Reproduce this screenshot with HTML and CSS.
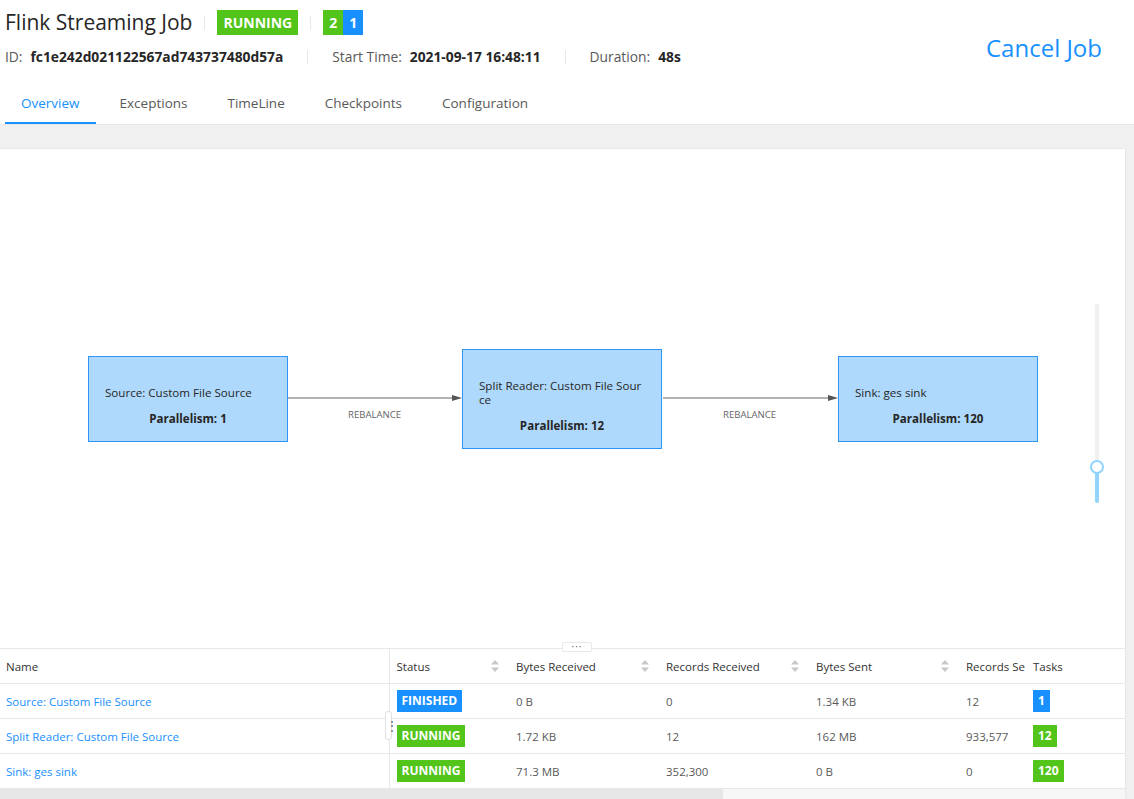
FILE: index.html
```html
<!DOCTYPE html>
<html lang="en">
<head>
  <meta charset="UTF-8">
  <title>Flink Streaming Job</title>
  <link rel="stylesheet" href="styles.css">
</head>
<body>
  <div class="job-header">
    <div class="job-info">
      <div class="job-title-row">
        <h1 class="job-name">Flink Streaming Job</h1>
        <span class="v-divider"></span>
        <span class="tag tag-lg green">RUNNING</span>
        <span class="v-divider"></span>
        <span class="tag-group">
          <span class="tag tag-lg green">2</span><span class="tag tag-lg blue">1</span>
        </span>
      </div>
      <div class="job-meta">
        <span class="meta-label">ID:</span>
        <span class="meta-value">fc1e242d021122567ad743737480d57a</span>
        <span class="v-divider wide"></span>
        <span class="meta-label">Start Time:</span>
        <span class="meta-value">2021-09-17 16:48:11</span>
        <span class="v-divider wide"></span>
        <span class="meta-label">Duration:</span>
        <span class="meta-value">48s</span>
      </div>
    </div>
    <a class="cancel-job">Cancel Job</a>
  </div>

  <div class="tabs">
    <div class="tab active">Overview</div>
    <div class="tab">Exceptions</div>
    <div class="tab">TimeLine</div>
    <div class="tab">Checkpoints</div>
    <div class="tab">Configuration</div>
  </div>

  <div class="main">
    <div class="card">
      <div class="graph">
        <svg class="edges" width="1125" height="499">
          <line x1="288" y1="249" x2="454" y2="249" />
          <polygon points="452,246 462,249 452,252" />
          <line x1="663" y1="249" x2="830" y2="249" />
          <polygon points="828,246 838,249 828,252" />
        </svg>
        <span class="edge-label" style="left: 348px;">REBALANCE</span>
        <span class="edge-label" style="left: 723px;">REBALANCE</span>

        <div class="node" style="left: 88px; top: 207px;">
          <div class="node-name">Source: Custom File Source</div>
          <div class="node-parallelism">Parallelism: 1</div>
        </div>
        <div class="node" style="left: 462px; top: 200px;">
          <div class="node-name">Split Reader: Custom File Sour<br>ce</div>
          <div class="node-parallelism">Parallelism: 12</div>
        </div>
        <div class="node" style="left: 838px; top: 207px;">
          <div class="node-name">Sink: ges sink</div>
          <div class="node-parallelism">Parallelism: 120</div>
        </div>

        <div class="zoom-slider">
          <div class="zoom-track"></div>
          <div class="zoom-fill"></div>
          <div class="zoom-handle"></div>
        </div>

        <div class="resize-bar">···</div>
      </div>

      <div class="table-wrap">
        <table class="vertex-table">
          <colgroup>
            <col style="width: 389px;">
            <col style="width: 120px;">
            <col style="width: 150px;">
            <col style="width: 150px;">
            <col style="width: 150px;">
            <col style="width: 66px;">
            <col style="width: 100px;">
          </colgroup>
          <thead>
            <tr>
              <th class="col-name">Name</th>
              <th class="sortable">Status<span class="sorter"><svg width="8" height="12" viewBox="0 0 8 12"><path d="M4 0 L8 4.5 L0 4.5 Z" /><path d="M0 7.5 L8 7.5 L4 12 Z" /></svg></span></th>
              <th class="sortable">Bytes Received<span class="sorter"><svg width="8" height="12" viewBox="0 0 8 12"><path d="M4 0 L8 4.5 L0 4.5 Z" /><path d="M0 7.5 L8 7.5 L4 12 Z" /></svg></span></th>
              <th class="sortable">Records Received<span class="sorter"><svg width="8" height="12" viewBox="0 0 8 12"><path d="M4 0 L8 4.5 L0 4.5 Z" /><path d="M0 7.5 L8 7.5 L4 12 Z" /></svg></span></th>
              <th class="sortable">Bytes Sent<span class="sorter"><svg width="8" height="12" viewBox="0 0 8 12"><path d="M4 0 L8 4.5 L0 4.5 Z" /><path d="M0 7.5 L8 7.5 L4 12 Z" /></svg></span></th>
              <th class="clip"><span class="clip-text">Records Se</span></th>
              <th class="col-tasks">Tasks</th>
            </tr>
          </thead>
          <tbody>
            <tr>
              <td class="col-name"><a>Source: Custom File Source</a></td>
              <td><span class="tag blue">FINISHED</span></td>
              <td>0 B</td>
              <td>0</td>
              <td>1.34 KB</td>
              <td class="clip">12</td>
              <td class="col-tasks"><span class="tag blue">1</span></td>
            </tr>
            <tr>
              <td class="col-name"><a>Split Reader: Custom File Source</a></td>
              <td><span class="tag green">RUNNING</span></td>
              <td>1.72 KB</td>
              <td>12</td>
              <td>162 MB</td>
              <td class="clip">933,577</td>
              <td class="col-tasks"><span class="tag green">12</span></td>
            </tr>
            <tr>
              <td class="col-name"><a>Sink: ges sink</a></td>
              <td><span class="tag green">RUNNING</span></td>
              <td>71.3 MB</td>
              <td>352,300</td>
              <td>0 B</td>
              <td class="clip">0</td>
              <td class="col-tasks"><span class="tag green">120</span></td>
            </tr>
          </tbody>
        </table>
        <div class="col-resizer">⋮</div>
      </div>

      <div class="h-scroll"><div class="h-scroll-thumb"></div></div>
    </div>
  </div>
</body>
</html>
```

FILE: styles.css
```css
:root {
  --primary-color: #1890ff;
  --success-color: #52c41a;
  --text-color: #333;
  --text-secondary: #595959;
  --border-color: #e8e8e8;
  --background-color: #f0f0f0;
}

body {
  font-family: "Open Sans", "Noto Sans", sans-serif;
  margin: 0;
  padding: 0;
  color: var(--text-color);
  background-color: var(--background-color);
  width: 1134px;
  height: 799px;
  overflow: hidden;
}

/* header */

.job-header {
  display: flex;
  justify-content: space-between;
  background-color: white;
  padding: 10px 0 12px 5px;
}

.job-title-row {
  display: flex;
  align-items: center;
  height: 25px;
}

.job-name {
  margin: 0;
  font-size: 21px;
  font-weight: 400;
  color: #262626;
  line-height: 25px;
}

.v-divider {
  display: inline-block;
  width: 1px;
  height: 14px;
  background-color: var(--border-color);
  margin: 0 12px;
}

.v-divider.wide {
  margin: 0 24px;
}

.tag {
  display: inline-block;
  color: white;
  font-weight: bold;
  font-size: 12px;
  line-height: 22px;
  padding: 0 5px;
}

.tag-lg {
  font-size: 14px;
  line-height: 25px;
  padding: 0 6px;
}

.tag.green {
  background-color: var(--success-color);
}

.tag.blue {
  background-color: var(--primary-color);
}

.tag-group {
  display: flex;
}

.job-meta {
  display: flex;
  align-items: center;
  margin-top: 12px;
  line-height: 20px;
  font-size: 13.8px;
}

.meta-label {
  color: var(--text-secondary);
  margin-right: 8px;
}

.meta-value {
  font-weight: bold;
  color: #262626;
}

.cancel-job {
  color: var(--primary-color);
  font-size: 24px;
  line-height: 34px;
  margin-top: 21px;
  margin-right: 32px;
  cursor: pointer;
}

/* tabs */

.tabs {
  display: flex;
  background-color: white;
  padding-left: 5px;
  border-bottom: 1px solid var(--border-color);
}

.tab {
  padding: 13px 16px 8px;
  margin-right: 8px;
  font-size: 13.5px;
  line-height: 22px;
  color: var(--text-secondary);
  border-bottom: 2px solid transparent;
  cursor: pointer;
}

.tab.active {
  color: var(--primary-color);
  border-bottom-color: var(--primary-color);
}

/* content */

.main {
  padding: 23px 8px 0 0;
}

.card {
  margin-left: -1px;
  background-color: white;
  border: 1px solid var(--border-color);
  border-bottom: none;
}

.graph {
  position: relative;
  height: 499px;
}

.edges {
  position: absolute;
  top: 0;
  left: 0;
}

.edges line {
  stroke: #666;
  stroke-width: 1;
}

.edges polygon {
  fill: #555;
}

.edge-label {
  position: absolute;
  top: 259px;
  font-size: 9.6px;
  line-height: 14px;
  color: #666;
}

.node {
  position: absolute;
  box-sizing: border-box;
  width: 200px;
  padding: 29px 16px 15px;
  background-color: #afd9fc;
  border: 1px solid #2f95f5;
  font-size: 11.6px;
  line-height: 14px;
  color: #262626;
}

.node-name {
  white-space: nowrap;
}

.node-parallelism {
  margin-top: 12px;
  text-align: center;
  font-weight: bold;
}

.zoom-slider {
  position: absolute;
  left: 1089px;
  top: 155px;
  width: 16px;
  height: 199px;
}

.zoom-track {
  position: absolute;
  left: 6px;
  top: 0;
  width: 4px;
  height: 100%;
  border-radius: 2px;
  background-color: #f0f0f0;
}

.zoom-fill {
  position: absolute;
  left: 6px;
  top: 163px;
  width: 4px;
  bottom: 0;
  border-radius: 2px;
  background-color: #91d5ff;
}

.zoom-handle {
  position: absolute;
  left: 1px;
  top: 156px;
  width: 10px;
  height: 10px;
  border: 2px solid #91d5ff;
  border-radius: 50%;
  background-color: white;
}

.resize-bar {
  position: absolute;
  left: 562px;
  bottom: -4px;
  width: 28px;
  height: 8px;
  border: 1px solid var(--border-color);
  border-radius: 2px;
  background-color: white;
  font-size: 10px;
  line-height: 6px;
  letter-spacing: 1px;
  text-align: center;
  color: #666;
  z-index: 2;
}

/* table */

.table-wrap {
  position: relative;
  overflow: hidden;
  border-top: 1px solid var(--border-color);
}

.vertex-table {
  width: 1125px;
  table-layout: fixed;
  border-collapse: collapse;
  font-size: 11.5px;
}

.vertex-table th,
.vertex-table td {
  height: 34px;
  padding: 0 7px;
  text-align: left;
  white-space: nowrap;
  border-bottom: 1px solid var(--border-color);
}

.vertex-table th {
  font-weight: 400;
  color: var(--text-color);
}

.vertex-table td {
  color: var(--text-secondary);
}

.vertex-table .col-name {
  padding-left: 6px;
  border-right: 1px solid var(--border-color);
}

.vertex-table a {
  color: var(--primary-color);
  cursor: pointer;
}

.sortable {
  position: relative;
}

.sorter {
  position: absolute;
  right: 10px;
  top: 11px;
  height: 12px;
}

.sorter svg {
  display: block;
  fill: #c8c8c8;
}

.clip {
  overflow: hidden;
  padding-right: 0 !important;
}

.clip-text {
  display: block;
  overflow: hidden;
}

.vertex-table .col-tasks {
  position: relative;
  padding-left: 8px;
  background-color: white;
  box-shadow: -6px 0 6px -4px rgba(0, 0, 0, 0.12);
}

.col-resizer {
  position: absolute;
  left: 385px;
  top: 62px;
  width: 5px;
  height: 27px;
  border: 1px solid #e0e0e0;
  border-radius: 3px;
  background-color: white;
  font-size: 12px;
  line-height: 27px;
  text-align: center;
  color: #666;
}

.h-scroll {
  height: 10px;
  background-color: #f7f7f7;
}

.h-scroll-thumb {
  width: 723px;
  height: 100%;
  background-color: #e6e6e6;
}
```
